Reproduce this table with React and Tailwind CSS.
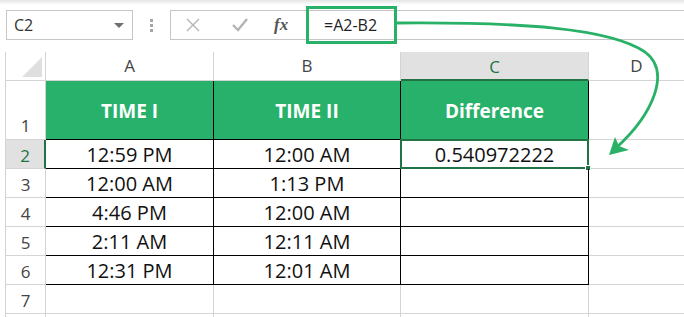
import React from 'react';

// Column widths include the right grid line
const cols = [
  { key: 'A', w: 'w-[168px]' },
  { key: 'B', w: 'w-[187px]' },
  { key: 'C', w: 'w-[188px]' },
  { key: 'D', w: 'w-[96px]' },
  { key: 'E', w: 'w-[80px]' },
];

const rows = [
  ['12:59 PM', '12:00 AM', '0.540972222'],
  ['12:00 AM', '1:13 PM', ''],
  ['4:46 PM', '12:00 AM', ''],
  ['2:11 AM', '12:11 AM', ''],
  ['12:31 PM', '12:01 AM', ''],
];

function FormulaBar() {
  return (
    <div className="flex h-[30px] items-stretch pl-[6px]">
      <div className="flex w-[127px] shrink-0 items-center justify-between border border-[#c6c6c6] pl-[7px] pr-[8px] text-[16px] text-[#333]">
        <span>C2</span>
        <span className="h-0 w-0 border-x-[5px] border-t-[5px] border-x-transparent border-t-[#707070]" />
      </div>
      <div className="flex w-[37px] shrink-0 flex-col items-center justify-center gap-[2px]">
        <span className="h-[3px] w-[3px] bg-[#a6a6a6]" />
        <span className="h-[3px] w-[3px] bg-[#a6a6a6]" />
        <span className="h-[3px] w-[3px] bg-[#a6a6a6]" />
      </div>
      <div className="flex w-[136px] shrink-0 items-center border-y border-l border-[#c6c6c6]">
        <svg className="ml-[15px]" width="14" height="14" viewBox="0 0 14 14">
          <path d="M1 1 L13 13 M13 1 L1 13" stroke="#b4b4b4" strokeWidth="1.4" fill="none" />
        </svg>
        <svg className="ml-[32px]" width="16" height="14" viewBox="0 0 16 14">
          <path d="M1 7 L6 12 L15 1" stroke="#b4b4b4" strokeWidth="2.4" fill="none" />
        </svg>
        <span className="ml-[26px] font-['Liberation_Serif',serif] text-[17px] font-bold italic text-[#555]">fx</span>
      </div>
      <div className="flex flex-1 items-center border-y border-[#c6c6c6] pl-[18px] text-[16px] text-[#222]">
        =A2-B2
      </div>
    </div>
  );
}

function HeaderRow() {
  return (
    <div className="flex h-[29px]">
      <div className="relative w-[40px] shrink-0 border-r border-b border-[#d4d4d4]">
        <svg className="absolute right-[3px] bottom-[3px]" width="20" height="20" viewBox="0 0 20 20">
          <polygon points="20,0 20,20 0,20" fill="#dfdfdf" />
        </svg>
      </div>
      {cols.map((c) =>
        c.key === 'C' ? (
          <div
            key={c.key}
            className={`${c.w} flex shrink-0 items-center justify-center border-r border-b-2 border-r-[#d4d4d4] border-b-[#217346] bg-[#e1e1e1] pt-[2px] text-[17px] text-[#217346]`}
          >
            {c.key}
          </div>
        ) : (
          <div
            key={c.key}
            className={`${c.w} flex shrink-0 items-center justify-center border-r border-b border-[#d4d4d4] text-[17px] text-[#444]`}
          >
            {c.key === 'E' ? '' : c.key}
          </div>
        )
      )}
    </div>
  );
}

function TitleRow() {
  return (
    <div className="flex h-[59px]">
      <div className="flex w-[40px] shrink-0 items-end justify-center border-r border-b border-[#d4d4d4] pb-[1px] text-[17px] text-[#444]">
        1
      </div>
      {['TIME I', 'TIME II', 'Difference'].map((t, i) => (
        <div
          key={t}
          className={`${cols[i].w} flex shrink-0 items-center justify-center border-r border-b border-black bg-[#28b16a] pt-[3px] text-[19px] font-bold text-white`}
        >
          {t}
        </div>
      ))}
      <div className="w-[96px] shrink-0 border-r border-b border-[#d4d4d4]" />
      <div className="w-[80px] shrink-0 border-b border-[#d4d4d4]" />
    </div>
  );
}

function DataRow({ n, values }) {
  const active = n === 2;
  return (
    <div className="flex h-[29px]">
      <div
        className={
          active
            ? 'flex w-[40px] shrink-0 items-end justify-center border-r-2 border-b border-r-[#217346] border-b-[#d4d4d4] bg-[#e1e1e1] text-[17px] text-[#217346]'
            : 'flex w-[40px] shrink-0 items-end justify-center border-r border-b border-[#d4d4d4] text-[17px] text-[#444]'
        }
      >
        {n}
      </div>
      {values.map((v, i) => (
        <div
          key={i}
          className={`${cols[i].w} relative flex shrink-0 items-center justify-center border-r border-b border-black pt-[1px] text-[20px] text-[#111]`}
        >
          {v}
          {active && i === 2 && (
            <div className="pointer-events-none absolute -top-px -left-px -right-px -bottom-px border-2 border-[#217346]">
              <span className="absolute -right-[4px] -bottom-[4px] h-[6px] w-[6px] border border-white bg-[#217346]" />
            </div>
          )}
        </div>
      ))}
      <div className="w-[96px] shrink-0 border-r border-b border-[#d4d4d4]" />
      <div className="w-[80px] shrink-0 border-b border-[#d4d4d4]" />
    </div>
  );
}

function EmptyRow({ n }) {
  return (
    <div className="flex h-[29px]">
      <div className="flex w-[40px] shrink-0 items-end justify-center border-r border-b border-[#d4d4d4] text-[17px] text-[#444]">
        {n}
      </div>
      {cols.map((c) => (
        <div key={c.key} className={`${c.w} shrink-0 border-r border-b border-[#d4d4d4]`} />
      ))}
    </div>
  );
}

export default function App() {
  return (
    <div className="relative h-[317px] w-[684px] overflow-hidden bg-white font-['Open_Sans',sans-serif]">
      <div className="h-[5px] bg-gradient-to-b from-[#e4e4e4] to-white" />
      <div className="mt-[5px]">
        <FormulaBar />
      </div>

      <div className="mt-[12px] ml-[5px] border-l border-[#d4d4d4]">
        <HeaderRow />
        <TitleRow />
        {rows.map((r, i) => (
          <DataRow key={i} n={i + 2} values={r} />
        ))}
        <EmptyRow n={7} />
        <EmptyRow n="" />
      </div>

      {/* callout: formula box linked to the result cell */}
      <div className="pointer-events-none absolute top-[6px] left-[306px] h-[38px] w-[91px] border-[3px] border-[#2ab168]" />
      <svg className="pointer-events-none absolute top-0 left-0" width="684" height="317" viewBox="0 0 684 317">
        <path
          d="M397 23 C520 22 610 28 645 52 C672 72 652 115 617 147"
          stroke="#2ab168"
          strokeWidth="2.8"
          fill="none"
        />
        <polygon points="609,155 629,150 619,146 615,137" fill="#2ab168" />
      </svg>
    </div>
  );
}
